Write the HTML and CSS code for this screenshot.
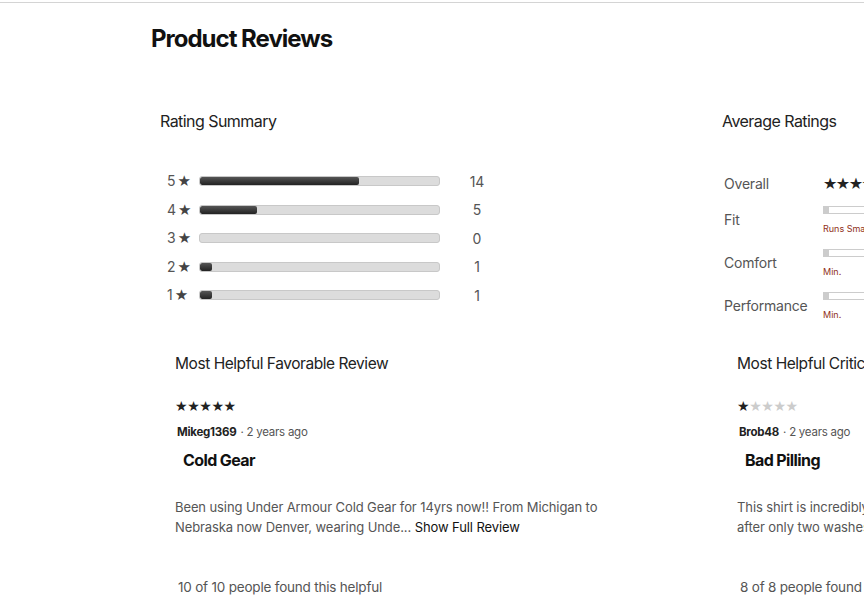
FILE: index.html
```html
<!DOCTYPE html>
<html lang="en">
<head>
<meta charset="utf-8">
<title>Product Reviews</title>
<link rel="stylesheet" href="styles.css">
</head>
<body>
<div class="topline"></div>
<main class="page">
  <h1 class="page-title">Product Reviews</h1>
  <div class="summary">
    <section class="col">
      <h2 class="col-title">Rating Summary</h2>
      <div class="hist">
        <div class="hist-row"><span class="hist-label">5<span class="hist-star">★</span></span><span class="bar"><span class="bar-fill" style="width:66.67%"></span></span><span class="hist-count">14</span></div>
        <div class="hist-row"><span class="hist-label">4<span class="hist-star">★</span></span><span class="bar"><span class="bar-fill" style="width:23.8%"></span></span><span class="hist-count">5</span></div>
        <div class="hist-row"><span class="hist-label">3<span class="hist-star">★</span></span><span class="bar"></span><span class="hist-count">0</span></div>
        <div class="hist-row"><span class="hist-label">2<span class="hist-star">★</span></span><span class="bar"><span class="bar-fill" style="width:5%"></span></span><span class="hist-count">1</span></div>
        <div class="hist-row"><span class="hist-label">1<span class="hist-star">★</span></span><span class="bar"><span class="bar-fill" style="width:5%"></span></span><span class="hist-count">1</span></div>
      </div>
    </section>
    <section class="col">
      <h2 class="col-title">Average Ratings</h2>
      <div class="avg">
        <div class="avg-row avg-row-first"><span class="avg-label">Overall</span><span class="avg-ctrl"><span class="stars stars-lg">★★★★<span class="star-off">★</span></span></span></div>
        <div class="avg-row"><span class="avg-label">Fit</span><span class="avg-ctrl"><span class="slider"><span class="slider-knob"></span></span><span class="slider-cap">Runs Small</span></span></div>
        <div class="avg-row"><span class="avg-label">Comfort</span><span class="avg-ctrl"><span class="slider"><span class="slider-knob"></span></span><span class="slider-cap">Min.</span></span></div>
        <div class="avg-row"><span class="avg-label">Performance</span><span class="avg-ctrl"><span class="slider"><span class="slider-knob"></span></span><span class="slider-cap">Min.</span></span></div>
      </div>
    </section>
  </div>
  <div class="helpful">
    <article class="review">
      <h3 class="review-head">Most Helpful Favorable Review</h3>
      <div class="stars stars-sm">★★★★★</div>
      <div class="review-meta"><span class="review-author">Mikeg1369</span><span class="review-date">· 2 years ago</span></div>
      <h4 class="review-title">Cold Gear</h4>
      <p class="review-body">Been using Under Armour Cold Gear for 14yrs now!! From Michigan to Nebraska now Denver, wearing Unde... <a class="review-more" href="#">Show Full Review</a></p>
      <p class="review-helpful">10 of 10 people found this helpful</p>
    </article>
    <article class="review">
      <h3 class="review-head">Most Helpful Critical Review</h3>
      <div class="stars stars-sm">★<span class="star-off">★★★★</span></div>
      <div class="review-meta"><span class="review-author">Brob48</span><span class="review-date">· 2 years ago</span></div>
      <h4 class="review-title">Bad Pilling</h4>
      <p class="review-body">This shirt is incredibly comfortable but it started pilling badly<br>after only two washes. Very disappoi... <a class="review-more" href="#">Show Full Review</a></p>
      <p class="review-helpful">8 of 8 people found this helpful</p>
    </article>
  </div>
</main>
</body>
</html>
```

FILE: styles.css
```css
html, body {
  margin: 0;
  padding: 0;
  background: #fff;
  overflow: hidden;
}
body {
  font-family: Inter, "Liberation Sans", sans-serif;
  color: #222;
  width: 864px;
  height: 613px;
}
.topline {
  height: 2px;
  border-bottom: 1px solid #d4d4d4;
}
.page {
  padding-left: 151px;
  width: 1400px;
}
.page-title {
  margin: 0;
  padding-top: 21px;
  font-size: 24px;
  line-height: 30px;
  font-weight: 700;
  letter-spacing: -1px;
  color: #111;
}
.summary {
  display: flex;
  padding-left: 9px;
  margin-top: 57px;
}
.col {
  flex: 0 0 562px;
}
.col-title {
  margin: 0;
  font-size: 16px;
  line-height: 20px;
  font-weight: 400;
  color: #222;
  letter-spacing: -0.55px;
}
.hist {
  margin-top: 36px;
}
.hist-row {
  display: flex;
  align-items: center;
  height: 28.5px;
  padding-left: 7px;
}
.hist-label {
  width: 32px;
  font-size: 14px;
  color: #555;
}
.hist-star {
  margin-left: 2px;
  color: #444;
  font-family: "DejaVu Sans", sans-serif;
  font-size: 15px;
}
.bar {
  display: block;
  width: 239px;
  height: 8px;
  border: 1px solid #c8c8c8;
  border-radius: 3px;
  background: #dcdcdc;
  overflow: hidden;
}
.bar-fill {
  display: block;
  height: 100%;
  background: linear-gradient(#555, #222);
  border-radius: 2px;
}
.hist-count {
  width: 30px;
  margin-left: 22px;
  text-align: center;
  font-size: 14px;
  color: #555;
}
.avg {
  margin-top: 40px;
}
.avg-row {
  display: flex;
  align-items: center;
  height: 43px;
}
.avg-row-first {
  height: 24px;
  margin-bottom: 3px;
}
.avg-label {
  width: 99px;
  padding-left: 2px;
  font-size: 14px;
  color: #555;
  letter-spacing: -0.2px;
}
.avg-ctrl {
  display: flex;
  flex-direction: column;
}
.stars {
  font-family: "DejaVu Sans", sans-serif;
  color: #222;
  white-space: nowrap;
}
.stars-lg {
  font-size: 16px;
  letter-spacing: -1.5px;
}
.star-off {
  color: #ccc;
}
.slider {
  display: block;
  position: relative;
  width: 120px;
  height: 6px;
  border: 1px solid #ccc;
  background: #fff;
}
.slider-knob {
  position: absolute;
  left: -1px;
  top: -1px;
  width: 6px;
  height: 8px;
  background: #ccc;
}
.slider-cap {
  margin-top: 9px;
  font-size: 9px;
  color: #8f3020;
  white-space: nowrap;
}
.helpful {
  display: flex;
  padding-left: 24px;
  margin-top: 27px;
}
.review {
  flex: 0 0 562px;
  width: 562px;
}
.review-head {
  margin: 0;
  font-size: 15.5px;
  line-height: 20px;
  font-weight: 400;
  color: #222;
  letter-spacing: -0.45px;
}
.stars-sm {
  margin-top: 24px;
  font-size: 14px;
  line-height: 16px;
  letter-spacing: -0.4px;
}
.review-meta {
  margin-top: 10px;
  padding-left: 2px;
  font-size: 11.5px;
  line-height: 16px;
  letter-spacing: -0.25px;
}
.review-author {
  font-weight: 700;
  color: #222;
  margin-right: 4px;
}
.review-date {
  color: #555;
}
.review-title {
  margin: 8px 0 0 8px;
  font-size: 16px;
  line-height: 24px;
  font-weight: 700;
  color: #111;
  letter-spacing: -0.6px;
}
.review-body {
  margin: 25px 0 0;
  width: 440px;
  font-size: 13px;
  line-height: 20px;
  color: #555;
  letter-spacing: -0.1px;
}
.review-more {
  color: #111;
  text-decoration: none;
}
.review-helpful {
  margin: 40px 0 0 3px;
  font-size: 13.5px;
  line-height: 20px;
  color: #555;
  letter-spacing: -0.2px;
}
```
